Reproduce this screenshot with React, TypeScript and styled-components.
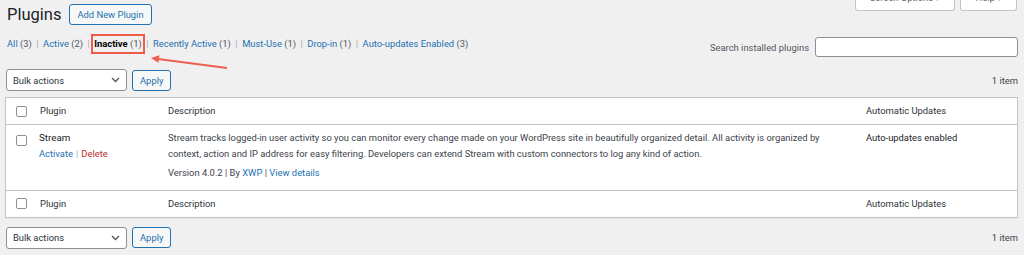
import styled, { createGlobalStyle } from "styled-components";

const GlobalStyle = createGlobalStyle`
  body {
    margin: 0;
    background: #f0f0f1;
    font-family: Roboto, "Liberation Sans", sans-serif;
    font-size: 9.4px;
    color: #3c434a;
  }
  * {
    box-sizing: border-box;
  }
`;

const Page = styled.div`
  position: relative;
  width: 1024px;
  height: 255px;
  overflow: hidden;
  padding: 4px 6px 0 5px;
`;

const Header = styled.div`
  display: flex;
  align-items: flex-start;
`;

const Title = styled.h1`
  margin: 0 0 0 2px;
  font-size: 16.5px;
  font-weight: 400;
  line-height: 21px;
  color: #1d2327;
`;

const OutlineButton = styled.button`
  height: 21px;
  padding: 0 7px;
  border: 1px solid #2271b1;
  border-radius: 3px;
  background: #f6f7f7;
  color: #2271b1;
  font-family: inherit;
  font-size: 9.4px;
  white-space: nowrap;
`;

const AddButton = styled(OutlineButton)`
  margin-left: 8px;
`;

const ScreenMeta = styled.div`
  display: flex;
  gap: 5px;
  margin-left: auto;
  margin-top: -20px;
  margin-right: 1px;
`;

const MetaTab = styled.button`
  height: 27px;
  padding: 0 14px;
  background: #fff;
  border: 1px solid #c3c4c7;
  border-top: none;
  border-radius: 0 0 3px 3px;
  color: #646970;
  font-family: inherit;
  font-size: 9.4px;
`;

const FilterRow = styled.div`
  display: flex;
  align-items: flex-start;
  margin-top: 9px;
`;

const Filters = styled.ul`
  display: flex;
  align-items: center;
  height: 20px;
  margin: 0;
  padding: 0 0 0 2px;
  list-style: none;
  line-height: 14px;
`;

const FilterItem = styled.li<{ $current?: boolean }>`
  display: flex;
  align-items: center;
  height: 20px;
  white-space: pre;
  ${(p) =>
    p.$current &&
    `
    border: 2px solid #ec5b4b;
    padding: 0 1px;
    margin: 0 -3px;
  `}
`;

const FilterLink = styled.a<{ $current?: boolean }>`
  color: ${(p) => (p.$current ? "#000" : "#2271b1")};
  font-weight: ${(p) => (p.$current ? 700 : 400)};
  text-decoration: none;
`;

const Count = styled.span`
  color: #50575e;
`;

const Sep = styled.span<{ $gap?: number }>`
  color: #a7aaad;
  margin: 0 ${(p) => p.$gap ?? 4.5}px;
`;

const SearchBox = styled.div`
  display: flex;
  align-items: center;
  gap: 6px;
  margin-left: auto;
  margin-top: 3px;
  color: #50575e;
`;

const SearchInput = styled.input`
  width: 203px;
  height: 20px;
  border: 1px solid #8c8f94;
  border-radius: 3px;
  background: #fff;
`;

const BulkRow = styled.div<{ $top: number }>`
  display: flex;
  align-items: center;
  gap: 5px;
  height: 22px;
  margin-top: ${(p) => p.$top}px;
  padding-left: 1px;
`;

const Select = styled.div`
  display: flex;
  align-items: center;
  justify-content: space-between;
  width: 121px;
  height: 22px;
  padding: 0 6px 0 6px;
  border: 1px solid #8c8f94;
  border-radius: 3px;
  background: #fff;
  color: #2c3338;
`;

const ItemCount = styled.span`
  margin-left: auto;
  color: #3c434a;
`;

const Table = styled.table`
  width: 100%;
  margin-top: 6px;
  border: 1px solid #c3c4c7;
  border-spacing: 0;
  background: #fff;
  table-layout: fixed;
  box-shadow: 0 1px 1px rgba(0, 0, 0, 0.04);
`;

const HeadCell = styled.th<{ $pad: number; $foot?: boolean }>`
  padding: 6px 0 6px ${(p) => p.$pad}px;
  line-height: 14px;
  font-weight: 400;
  text-align: left;
  color: #2c3338;
  vertical-align: middle;
  ${(p) =>
    p.$foot
      ? "border-top: 1px solid #c3c4c7;"
      : "border-bottom: 1px solid #c3c4c7;"}
`;

const Cell = styled.td<{ $pad: number }>`
  padding: 5px 8px 9px ${(p) => p.$pad}px;
  line-height: 15.5px;
  vertical-align: top;
`;

const CheckCell = styled.td`
  padding: 10px 0 0 10px;
  vertical-align: top;
`;

const Check = styled.span`
  display: block;
  width: 11px;
  height: 11px;
  border: 1px solid #8c8f94;
  border-radius: 2px;
  background: #fff;
`;

const PluginName = styled.strong`
  display: block;
  font-weight: 400;
  font-size: 9.8px;
  color: #1d2327;
`;

const RowActions = styled.div`
  white-space: pre;
`;

const Link = styled.a<{ $danger?: boolean }>`
  color: ${(p) => (p.$danger ? "#b32d2e" : "#2271b1")};
  text-decoration: none;
`;

const DescText = styled.p`
  margin: 0;
`;

const Meta = styled.div`
  margin-top: 4px;
  white-space: pre;
`;

const AutoText = styled.span`
  color: #1d2327;
`;

const Arrow = styled.svg`
  position: absolute;
  left: 146px;
  top: 52px;
  pointer-events: none;
`;

const filters = [
  { label: "All", count: 3 },
  { label: "Active", count: 2 },
  { label: "Inactive", count: 1, current: true },
  { label: "Recently Active", count: 1 },
  { label: "Must-Use", count: 1 },
  { label: "Drop-in", count: 1 },
  { label: "Auto-updates Enabled", count: 3 },
];

function Chevron() {
  return (
    <svg width="9" height="6" viewBox="0 0 9 6">
      <path d="M1 1l3.5 3.5L8 1" fill="none" stroke="#50575e" strokeWidth="1.3" />
    </svg>
  );
}

function Bulk({ top }: { top: number }) {
  return (
    <BulkRow $top={top}>
      <Select>
        Bulk actions
        <Chevron />
      </Select>
      <OutlineButton>Apply</OutlineButton>
      <ItemCount>1 item</ItemCount>
    </BulkRow>
  );
}

function HeadRow({ foot }: { foot?: boolean }) {
  return (
    <tr>
      <HeadCell $pad={10} $foot={foot}>
        <Check />
      </HeadCell>
      <HeadCell $pad={6} $foot={foot}>Plugin</HeadCell>
      <HeadCell $pad={7} $foot={foot}>Description</HeadCell>
      <HeadCell $pad={8} $foot={foot}>Automatic Updates</HeadCell>
    </tr>
  );
}

export default function App() {
  return (
    <Page>
      <GlobalStyle />
      <Header>
        <Title>Plugins</Title>
        <AddButton>Add New Plugin</AddButton>
        <ScreenMeta>
          <MetaTab>Screen Options ▾</MetaTab>
          <MetaTab>Help ▾</MetaTab>
        </ScreenMeta>
      </Header>

      <FilterRow>
        <Filters>
          {filters.map((f, i) => (
            <>
              <FilterItem key={f.label} $current={f.current}>
                <FilterLink $current={f.current}>{f.label}</FilterLink>
                <Count> ({f.count})</Count>
              </FilterItem>
              {i < filters.length - 1 && <Sep>|</Sep>}
            </>
          ))}
        </Filters>
        <SearchBox>
          <label>Search installed plugins</label>
          <SearchInput type="search" />
        </SearchBox>
      </FilterRow>

      <Bulk top={12} />

      <Table>
        <colgroup>
          <col style={{ width: 28 }} />
          <col style={{ width: 127 }} />
          <col style={{ width: 697 }} />
          <col />
        </colgroup>
        <thead>
          <HeadRow />
        </thead>
        <tbody>
          <tr>
            <CheckCell>
              <Check />
            </CheckCell>
            <Cell $pad={5}>
              <PluginName>Stream</PluginName>
              <RowActions>
                <Link>Activate</Link>
                <Sep $gap={3}>|</Sep>
                <Link $danger>Delete</Link>
              </RowActions>
            </Cell>
            <Cell $pad={7}>
              <DescText>
                Stream tracks logged-in user activity so you can monitor every change made on your
                WordPress site in beautifully organized detail. All activity is organized by
                context, action and IP address for easy filtering. Developers can extend Stream
                with custom connectors to log any kind of action.
              </DescText>
              <Meta>
                Version 4.0.2 | By <Link>XWP</Link> | <Link>View details</Link>
              </Meta>
            </Cell>
            <Cell $pad={8}>
              <AutoText>Auto-updates enabled</AutoText>
            </Cell>
          </tr>
        </tbody>
        <tfoot>
          <HeadRow foot />
        </tfoot>
      </Table>

      <Bulk top={9} />

      <Arrow width="86" height="20" viewBox="0 0 86 20">
        <line x1="81" y1="16" x2="12" y2="7" stroke="#ef5f4f" strokeWidth="2" />
        <polygon points="5,6 13.4,3.2 12.4,10.8" fill="#ef5f4f" />
      </Arrow>
    </Page>
  );
}
